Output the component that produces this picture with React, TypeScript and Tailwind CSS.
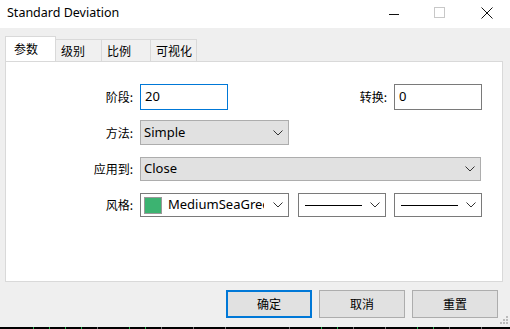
const cjk = { fontFamily: '"Noto Sans CJK SC", "Noto Sans", sans-serif' };
const latin = { fontFamily: '"Noto Sans", "Noto Sans CJK SC", sans-serif' };

function Chevron() {
  return (
    <svg width="10" height="6" viewBox="0 0 10 6" className="shrink-0">
      <path d="M0.5 0.5 L5 5 L9.5 0.5" fill="none" stroke="#333" strokeWidth="1" />
    </svg>
  );
}

function Label({ text }: { text: string }) {
  return (
    <div className="w-[134px] text-right text-[12px] text-[#000] pr-[7px]" style={cjk}>
      {text}
    </div>
  );
}

export default function App() {
  const tabs = ["级别", "比例", "可视化"];
  const tabWidths = ["w-[46px]", "w-[49px]", "w-[46px]"];
  const ticks = [33, 49, 65, 81, 129, 145, 321, 337, 417, 433];
  const grayTicks = [97, 161, 193, 225, 289, 353, 385, 449, 481];

  return (
    <div className="w-[510px] h-[329px] bg-[#efefef] flex flex-col overflow-hidden relative" style={latin}>
      {/* Title bar */}
      <div className="h-[28px] bg-white flex items-center shrink-0">
        <div className="pl-[7px] text-[12.5px] text-[#000] flex-1 -mt-[2px]">Standard Deviation</div>
        <div className="w-[10px] h-px bg-[#111] mr-[35px]" />
        <div className="w-[11px] h-[11px] border border-[#c8c8c8] mr-[36px] -mt-[3px]" />
        <svg width="12" height="12" viewBox="0 0 12 12" className="mr-[17px] -mt-[3px]">
          <path d="M0.5 0.5 L11.5 11.5 M11.5 0.5 L0.5 11.5" stroke="#111" strokeWidth="1" />
        </svg>
      </div>

      {/* Tabs */}
      <div className="flex items-end pl-[5px] mt-[9px] h-[24px] shrink-0 relative z-10">
        <div className="w-[51px] h-[25px] bg-white border border-[#d9d9d9] border-b-0 text-[12px] pl-[8px] pt-[3px]" style={cjk}>
          参数
        </div>
        {tabs.map((t, i) => (
          <div
            key={t}
            className={`${tabWidths[i]} h-[22px] bg-[#f0f0f0] border border-[#d9d9d9] border-l-0 border-b-0 text-[12px] pl-[5px] pt-[2px]`}
            style={cjk}
          >
            {t}
          </div>
        ))}
      </div>

      {/* Panel */}
      <div className="mx-[5px] mr-[7px] h-[221px] bg-white border border-[#d9d9d9] pt-[22px] flex flex-col shrink-0">
        <div className="flex items-center h-[26px]">
          <Label text="阶段:" />
          <div className="w-[88px] h-[26px] border border-[#0078d7] flex items-center pl-[4px] text-[13px]">20</div>
          <div className="w-[166px] text-right text-[12px] pr-[7px]" style={cjk}>转换:</div>
          <div className="w-[88px] h-[26px] border border-[#7a7a7a] flex items-center pl-[4px] text-[13px]">0</div>
        </div>

        <div className="flex items-center h-[25px] mt-[10px]">
          <Label text="方法:" />
          <div className="w-[149px] h-[25px] bg-[#e1e1e1] border border-[#adadad] flex items-center pl-[3px] pr-[5px] text-[13px]">
            <span className="flex-1">Simple</span>
            <Chevron />
          </div>
        </div>

        <div className="flex items-center h-[24px] mt-[12px]">
          <Label text="应用到:" />
          <div className="w-[341px] h-[24px] bg-[#e1e1e1] border border-[#adadad] flex items-center pl-[3px] pr-[5px] text-[13px]">
            <span className="flex-1">Close</span>
            <Chevron />
          </div>
        </div>

        <div className="flex items-center h-[24px] mt-[12px]">
          <Label text="风格:" />
          <div className="w-[149px] h-[24px] bg-white border border-[#7a7a7a] flex items-center pl-[3px] pr-[5px] text-[13px]">
            <div className="w-[18px] h-[17px] bg-[#3cb371] border border-[#999] shrink-0" />
            <span className="ml-[6px] w-[96px] overflow-hidden whitespace-nowrap">MediumSeaGreen</span>
            <span className="flex-1" />
            <Chevron />
          </div>
          <div className="w-[88px] h-[24px] ml-[9px] bg-white border border-[#7a7a7a] flex items-center pl-[6px] pr-[5px]">
            <div className="w-[57px] h-px bg-black" />
            <span className="flex-1" />
            <Chevron />
          </div>
          <div className="w-[88px] h-[24px] ml-[8px] bg-white border border-[#7a7a7a] flex items-center pl-[6px] pr-[5px]">
            <div className="w-[57px] h-px bg-black" />
            <span className="flex-1" />
            <Chevron />
          </div>
        </div>
      </div>

      {/* Buttons */}
      <div className="flex justify-end gap-[7px] pr-[12px] mt-[8px] shrink-0">
        <div className="w-[86px] h-[28px] bg-[#e1e1e1] border-2 border-[#0078d7] flex items-center justify-center text-[12px]" style={cjk}>
          确定
        </div>
        <div className="w-[86px] h-[28px] bg-[#e1e1e1] border border-[#adadad] flex items-center justify-center text-[12px]" style={cjk}>
          取消
        </div>
        <div className="w-[86px] h-[28px] bg-[#e1e1e1] border border-[#adadad] flex items-center justify-center text-[12px]" style={cjk}>
          重置
        </div>
      </div>

      {/* resize grip */}
      <svg width="8" height="8" viewBox="0 0 8 8" className="absolute right-[2px] bottom-[5px]">
        <rect x="6" y="0" width="2" height="2" fill="#bbb" />
        <rect x="3" y="3" width="2" height="2" fill="#bbb" />
        <rect x="6" y="3" width="2" height="2" fill="#bbb" />
        <rect x="0" y="6" width="2" height="2" fill="#bbb" />
        <rect x="3" y="6" width="2" height="2" fill="#bbb" />
        <rect x="6" y="6" width="2" height="2" fill="#bbb" />
      </svg>

      {/* underlying chart strip */}
      <div className="absolute left-0 bottom-0 w-[510px] h-[2px] bg-black">
        {ticks.map((x) => (
          <div key={x} className="absolute top-0 w-px h-[2px] bg-[#22b14c]" style={{ left: x }} />
        ))}
        {grayTicks.map((x) => (
          <div key={x} className="absolute top-0 w-px h-[2px] bg-[#777]" style={{ left: x }} />
        ))}
      </div>
    </div>
  );
}
